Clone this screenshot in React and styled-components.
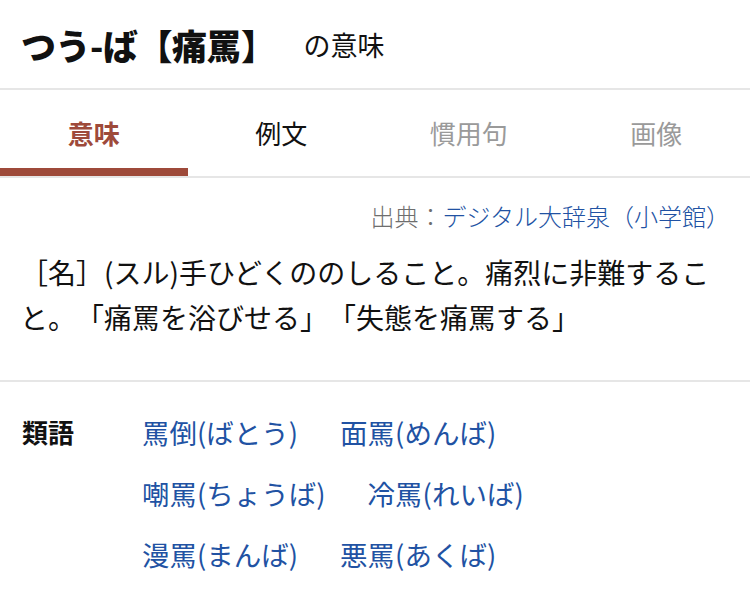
import React from "react";
import styled, { createGlobalStyle } from "styled-components";

const Global = createGlobalStyle`
  html, body { margin: 0; padding: 0; background: #fff; }
  body {
    font-family: "Noto Sans CJK JP", "Noto Sans", sans-serif;
    color: #111;
    text-spacing-trim: space-all;
  }
`;

const Page = styled.div`
  width: 750px;
  background: #fff;
`;

const Header = styled.header`
  height: 88px;
  display: flex;
  align-items: center;
  padding-left: 21px;
  gap: 28px;
  border-bottom: 2px solid #e6e6e6;
`;

const Title = styled.h1`
  margin: 0;
  font-size: 35px;
  font-weight: 900;
  letter-spacing: -0.5px;
`;

const Sub = styled.span`
  font-size: 27px;
  font-weight: 400;
`;

const Tabs = styled.nav`
  display: grid;
  grid-template-columns: repeat(4, 1fr);
  border-bottom: 2px solid #e6e6e6;
`;

const Tab = styled.div`
  height: 86px;
  display: flex;
  align-items: center;
  justify-content: center;
  font-size: 26px;
  font-weight: ${(p) => (p.$active ? 700 : 400)};
  color: ${(p) => (p.$active ? "#9e4a3a" : p.$muted ? "#9a9a9a" : "#111")};
  box-sizing: border-box;
  border-bottom: 8px solid ${(p) => (p.$active ? "#9e4a3a" : "transparent")};
  padding-top: 6px;
`;

const Meaning = styled.section`
  padding: 22px 20px 40px;
  border-bottom: 2px solid #e6e6e6;
`;

const Source = styled.div`
  text-align: right;
  font-size: 24px;
  font-weight: 300;
  color: #6e6e6e;
  line-height: 32px;
`;

const SourceLink = styled.span`
  color: #2152a3;
`;

const Body = styled.p`
  margin: 18px 0 0;
  font-size: 28px;
  line-height: 45px;
  color: #111;
`;

const Synonyms = styled.section`
  display: flex;
  padding: 30px 0 0 22px;
`;

const SynLabel = styled.div`
  font-size: 26px;
  font-weight: 700;
  width: 120px;
  line-height: 40px;
  flex-shrink: 0;
`;

const SynList = styled.div`
  display: flex;
  flex-direction: column;
  gap: 21px;
`;

const SynRow = styled.div`
  display: flex;
  gap: 42px;
`;

const SynLink = styled.a`
  font-size: 27.5px;
  line-height: 40px;
  color: #2152a3;
  text-decoration: none;
`;

const rows = [
  ["罵倒(ばとう)", "面罵(めんば)"],
  ["嘲罵(ちょうば)", "冷罵(れいば)"],
  ["漫罵(まんば)", "悪罵(あくば)"],
];

export default function App() {
  return (
    <Page>
      <Global />
      <Header>
        <Title>つう-ば【痛罵】</Title>
        <Sub>の意味</Sub>
      </Header>
      <Tabs>
        <Tab $active>意味</Tab>
        <Tab>例文</Tab>
        <Tab $muted>慣用句</Tab>
        <Tab $muted>画像</Tab>
      </Tabs>
      <Meaning>
        <Source>
          出典：<SourceLink>デジタル大辞泉（小学館）</SourceLink>
        </Source>
        <Body>
          ［名］(スル)手ひどくののしること。痛烈に非難すること。「痛罵を浴びせる」「失態を痛罵する」
        </Body>
      </Meaning>
      <Synonyms>
        <SynLabel>類語</SynLabel>
        <SynList>
          {rows.map((r, i) => (
            <SynRow key={i}>
              {r.map((w) => (
                <SynLink key={w} href="#">
                  {w}
                </SynLink>
              ))}
            </SynRow>
          ))}
        </SynList>
      </Synonyms>
    </Page>
  );
}
